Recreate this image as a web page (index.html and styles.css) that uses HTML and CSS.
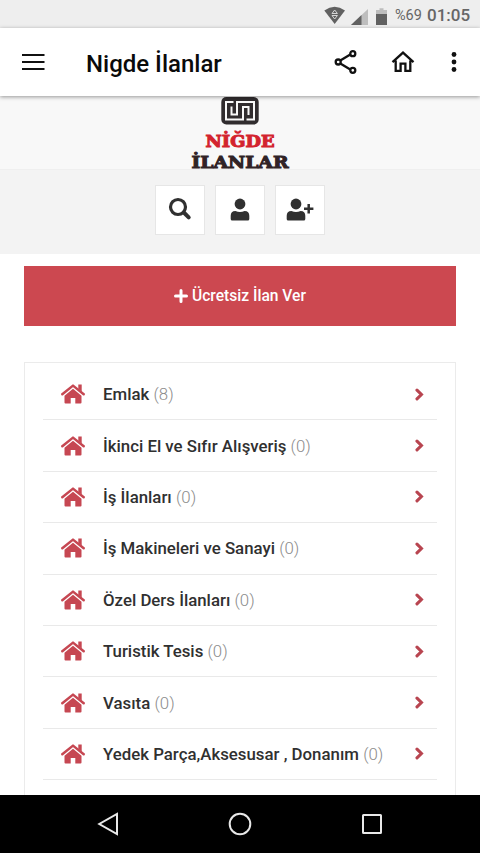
FILE: index.html
```html
<!DOCTYPE html>
<html lang="tr">
<head>
<meta charset="utf-8">
<title>Nigde İlanlar</title>
<link rel="stylesheet" href="styles.css">
</head>
<body>
<svg class="defs" width="0" height="0">
  <symbol id="house" viewBox="0 0 24 20">
    <path d="M1.300 10.200 12 1.600l10.700 8.600" fill="none" stroke="currentColor" stroke-width="2.500" stroke-linecap="round" stroke-linejoin="round"/>
    <path d="M17.300.6h3.400v7l-3.400-2.700zM12 4.800l8.500 7v6.700q0 1-1 1h-5.200v-5.600H9.700v5.600H4.500q-1 0-1-1v-6.700z" fill="currentColor"/>
  </symbol>
  <symbol id="chevron" viewBox="0 0 9 13"><path d="M2 2.200l4.400 4.300L2 10.800" fill="none" stroke="currentColor" stroke-width="3.100" stroke-linecap="round" stroke-linejoin="miter"/></symbol>
  <symbol id="user" viewBox="0 0 20 23"><circle cx="10" cy="6" r="5.400"/><path d="M.7 21v-3.300q0-4.700 4.700-4.700 4.600 1.800 9.200 0 4.700 0 4.700 4.700V21q0 1.500-1.500 1.500H2.200Q.7 22.500.7 21z"/></symbol>
</svg>
<div class="screen">
  <header class="status">
    <svg width="64" height="20" viewBox="0 0 64 20">
      <path d="M.3 5.500Q10.700-1.800 21 5.500L10.700 19z" fill="#616161"/>
      <path d="M8 8.500l2.700-3.500 2.700 3.500zM8 10.500h5.400l-2.700 3.500z" fill="none" stroke="#d5d5d5" stroke-width="1"/>
      <path d="M44 4v16H27z" fill="#bdbdbd"/><path d="M37.500 10.100V20H27z" fill="#616161"/>
      <path d="M52 5h3.500V3.200h4V5H63v5H52z" fill="#bdbdbd"/><path d="M52 9h11v11H52z" fill="#616161"/>
    </svg>
    <span class="percent">%69</span><span class="clock">01:05</span>
  </header>
  <nav class="appbar">
    <svg class="menu" width="23" height="18" viewBox="0 0 23 18"><path d="M0 2h22.500M0 9h22.500M0 16h22.500" stroke="#111" stroke-width="2.200"/></svg>
    <h1 class="title">Nigde İlanlar</h1>
    <svg class="share" width="24" height="26" viewBox="0 0 24 26" fill="none" stroke="#111" stroke-width="2.300"><path d="M6.300 11.600l10-6M6.300 14.500l10 6"/><circle cx="4.200" cy="13" r="2.500"/><circle cx="18.800" cy="4.700" r="2.500"/><circle cx="18.800" cy="21.300" r="2.500"/></svg>
    <svg class="home" width="24" height="24" viewBox="0 0 24 24" fill="none" stroke="#111" stroke-width="2.300"><path d="M1.500 12.200L12 2.600l10.500 9.600M4.700 10.500v10.400h4.900v-7.200h4.800v7.200h4.900V10.500"/></svg>
    <svg class="more" width="6" height="22" viewBox="0 0 6 22" fill="#111"><circle cx="3" cy="3.500" r="2.400"/><circle cx="3" cy="11" r="2.400"/><circle cx="3" cy="18.500" r="2.400"/></svg>
  </nav>
  <main class="content">
    <div class="brand">
      <svg width="104" height="75" viewBox="0 0 104 75">
        <rect x="33.300" y="1" width="37.400" height="27.500" rx="5" fill="#302c2e"/>
        <path d="M45.500 6H38v17.500h17V11h5.500v8M58.500 23.500H66V6H49v12.500h-5.500v-8" fill="none" stroke="#f8f8f8" stroke-width="2"/>
        <text class="mark red" x="17.500" y="51.200" textLength="69" lengthAdjust="spacingAndGlyphs">NİĞDE</text>
        <text class="mark dark" x="3.500" y="72.300" textLength="97" lengthAdjust="spacingAndGlyphs">İLANLAR</text>
      </svg>
    </div>
    <div class="tools">
      <a class="tool"><svg width="24" height="24" viewBox="0 0 24 24" fill="none" stroke="#303030"><circle cx="10" cy="10" r="7.500" stroke-width="3.200"/><path d="M15.800 15.500l4.900 4.900" stroke-width="4" stroke-linecap="round"/></svg></a>
      <a class="tool"><svg width="20" height="23"><use href="#user"/></svg></a>
      <a class="tool"><svg width="28" height="23" viewBox="0 0 28 23"><use href="#user" width="20" height="23"/><path d="M22.700 6v9.400M18 10.700h9.400" stroke="#303030" stroke-width="2.500"/></svg></a>
    </div>
    <a class="post"><svg width="14" height="14" viewBox="0 0 14 14"><path d="M7 1.500v11M1.500 7h11" stroke="#fff" stroke-width="3" stroke-linecap="round"/></svg><span>Ücretsiz İlan Ver</span></a>
    <ul class="list">
      <li class="row"><svg class="cat"><use href="#house"/></svg><span class="name">Emlak <small>(8)</small></span><svg class="go"><use href="#chevron"/></svg></li>
      <li class="row"><svg class="cat"><use href="#house"/></svg><span class="name">İkinci El ve Sıfır Alışveriş <small>(0)</small></span><svg class="go"><use href="#chevron"/></svg></li>
      <li class="row"><svg class="cat"><use href="#house"/></svg><span class="name">İş İlanları <small>(0)</small></span><svg class="go"><use href="#chevron"/></svg></li>
      <li class="row"><svg class="cat"><use href="#house"/></svg><span class="name">İş Makineleri ve Sanayi <small>(0)</small></span><svg class="go"><use href="#chevron"/></svg></li>
      <li class="row"><svg class="cat"><use href="#house"/></svg><span class="name">Özel Ders İlanları <small>(0)</small></span><svg class="go"><use href="#chevron"/></svg></li>
      <li class="row"><svg class="cat"><use href="#house"/></svg><span class="name">Turistik Tesis <small>(0)</small></span><svg class="go"><use href="#chevron"/></svg></li>
      <li class="row"><svg class="cat"><use href="#house"/></svg><span class="name">Vasıta <small>(0)</small></span><svg class="go"><use href="#chevron"/></svg></li>
      <li class="row"><svg class="cat"><use href="#house"/></svg><span class="name">Yedek Parça,Aksesusar , Donanım <small>(0)</small></span><svg class="go"><use href="#chevron"/></svg></li>
    </ul>
  </main>
  <footer class="navbar">
    <svg width="24" height="24" viewBox="0 0 24 24"><path d="M21 2v20L3.300 12z"/></svg>
    <svg width="24" height="24" viewBox="0 0 24 24"><circle cx="12" cy="12" r="10.300"/></svg>
    <svg width="24" height="24" viewBox="0 0 24 24"><rect x="3" y="3" width="18" height="18" rx=".5"/></svg>
  </footer>
</div>
</body>
</html>
```
FILE: styles.css
```css
* { box-sizing: border-box; }
body { margin: 0; font-family: Roboto, sans-serif; background: #fff; }
svg { display: block; flex: none; }
.defs { position: absolute; }
.screen { width: 480px; height: 853px; display: flex; flex-direction: column; overflow: hidden; }
.status { height: 28px; flex: none; background: #eee; display: flex; align-items: center; padding: 2px 0 0 324px; color: #666; }
.percent { font-size: 14.5px; margin-left: 7px; width: 32px; line-height: 28px; padding-top: 1px; }
.clock { font-size: 17px; font-weight: 500; line-height: 28px; }
.appbar { height: 68px; flex: none; display: flex; align-items: center; background: #fff; padding-left: 22px; box-shadow: 0 1px 4px rgba(0,0,0,.4); z-index: 1; }
.title { margin: 3px 0 0 41px; width: 248px; font-size: 24px; line-height: 30px; font-weight: 500; color: #0a0a0a; white-space: nowrap; }
.home { margin-left: 33px; }
.more { margin-left: 36px; }
.content { flex: 1; min-height: 0; display: flex; flex-direction: column; overflow: hidden; }
.brand { height: 74px; flex: none; background: #f8f8f8; border-bottom: 1px solid #efefef; display: flex; justify-content: center; }
.mark { font-family: "DejaVu Serif", serif; font-weight: bold; stroke-width: 1px; }
.red { fill: #d3232e; stroke: #d3232e; font-size: 16.5px; }
.dark { fill: #302326; stroke: #302326; font-size: 16.5px; }
.tools { height: 84px; flex: none; background: #f3f3f3; display: flex; justify-content: center; gap: 10px; padding-top: 15px; }
.tool { width: 50px; height: 50px; background: #fff; border: 1px solid #e6e6e6; display: flex; align-items: center; justify-content: center; fill: #303030; padding-bottom: 2px; }
.post { height: 60px; flex: none; margin: 12px 24px 36px; background: #cc4850; color: #fff; display: flex; align-items: center; justify-content: center; gap: 4px; font-size: 15.6px; font-weight: 500; }
.list { list-style: none; margin: 0 24px; padding: 6px 18px 0; flex: 1; border: 1px solid #ebebeb; border-bottom: 0; }
.row { height: 51.4px; display: flex; align-items: center; border-bottom: 1px solid #e9e9e9; padding: 0 13px 0 18px; }
.cat { width: 24px; height: 20px; color: #c64752; }
.name { flex: 1; margin-left: 18px; font-size: 16.82px; font-weight: 500; color: #303030; white-space: nowrap; }
.name small { font-size: inherit; font-weight: 300; color: #8b8b8b; }
.go { width: 9px; height: 13px; color: #b84550; }
.navbar { height: 58px; flex: none; background: #000; display: flex; align-items: center; justify-content: space-between; padding: 0 96px; fill: none; stroke: #e8e8e8; stroke-width: 2; }
```
